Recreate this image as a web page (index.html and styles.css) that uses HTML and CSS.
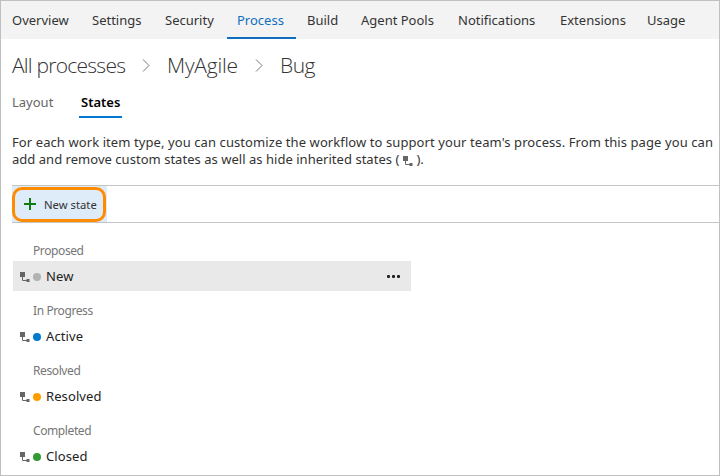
FILE: index.html
```
<!DOCTYPE html>
<html lang="en">
<head>
<meta charset="utf-8">
<title>Process - Bug states</title>
<link rel="stylesheet" href="styles.css">
</head>
<body>
<svg class="defs" width="0" height="0"><symbol id="inherit" viewBox="0 0 10 10"><path class="link" d="M2.500 4V8.500H7"/><path d="M0 0H5V5H0ZM6.500 7H9.500V10H6.500Z"/></symbol></svg>
<div class="page">
  <nav class="hubs">
    <a><span>Overview</span></a><a><span>Settings</span></a><a><span>Security</span></a><a class="selected"><span>Process</span></a><a><span>Build</span></a><a><span>Agent Pools</span></a><a><span>Notifications</span></a><a><span>Extensions</span></a><a><span>Usage</span></a>
  </nav>
  <header class="crumbs">
    <span class="all">All processes</span>
    <svg width="8" height="14" viewBox="0 0 8 14"><path d="M1 1.500L7 7.500L1 13.500"/></svg>
    <span class="process">MyAgile</span>
    <svg width="8" height="14" viewBox="0 0 8 14"><path d="M1 1.500L7 7.500L1 13.500"/></svg>
    <span class="type">Bug</span>
  </header>
  <div class="tabs"><a class="layout">Layout</a><a class="active">States</a></div>
  <div class="description">
    <p class="line-one">For each work item type, you can customize the workflow to support your team's process. From this page you can</p>
    <p class="line-two">add and remove custom states as well as hide inherited states (<svg class="inherit" width="10" height="10"><use href="#inherit"/></svg>).</p>
  </div>
  <div class="toolbar"><button class="new-state"><svg width="12" height="12" viewBox="0 0 12 12"><path d="M6 0V12M0 6H12"/></svg><span>New state</span></button></div>
  <main class="states">
    <section><h2>Proposed</h2><div class="row hovered"><svg class="inherit" width="10" height="10"><use href="#inherit"/></svg><i class="dot gray"></i><span>New</span><b class="more"><i></i><i></i><i></i></b></div></section>
    <section><h2>In Progress</h2><div class="row"><svg class="inherit" width="10" height="10"><use href="#inherit"/></svg><i class="dot blue"></i><span>Active</span></div></section>
    <section><h2>Resolved</h2><div class="row"><svg class="inherit" width="10" height="10"><use href="#inherit"/></svg><i class="dot orange"></i><span>Resolved</span></div></section>
    <section><h2>Completed</h2><div class="row"><svg class="inherit" width="10" height="10"><use href="#inherit"/></svg><i class="dot green"></i><span>Closed</span></div></section>
  </main>
</div>
</body>
</html>
```
FILE: styles.css
```
* { box-sizing: border-box; }
body { margin: 0; background: #fff; color: #333; font: 13px "Noto Sans", "Open Sans", sans-serif; }
.defs { position: absolute; }
.page { width: 720px; height: 476px; border: 1px solid #c0c0c0; overflow: hidden; }
.hubs { display: grid; grid-template-columns: 80px 73px 72px 70px 54px 97px 102px 87px 60px; height: 38px; padding-left: 1px; background: #f3f3f3; }
.hubs a { height: 38px; padding-left: 10px; line-height: 38px; white-space: nowrap; }
.hubs .selected { width: 69px; color: #106ebe; border-bottom: 2px solid #106ebe; }
.crumbs { display: flex; align-items: center; height: 52px; padding-left: 11px; font: 300 21px "Open Sans", sans-serif; white-space: nowrap; color: #333; }
.crumbs svg { flex: none; fill: none; stroke: #777; stroke-width: 1; }
.all { width: 130px; letter-spacing: -.75px; }
.process { width: 88px; margin-left: 17px; letter-spacing: -.2px; }
.type { margin-left: 17px; letter-spacing: -.5px; }
.tabs { display: flex; height: 27px; padding-left: 11px; line-height: 23px; }
.layout { width: 67px; color: #666; }
.tabs .active { width: 43px; padding-left: 2px; color: #000; font-weight: 600; border-bottom: 2px solid #0078d4; }
.description { height: 67px; padding: 16px 0 0 11px; line-height: 17px; letter-spacing: .087px; white-space: nowrap; }
.description p { margin: 0; height: 17px; }
.line-two { letter-spacing: .03px; }
.inherit { flex: none; fill: #666; }
.inherit .link, .link { fill: none; stroke: #666; }
.description .inherit { margin: 0 3px -2px 4px; }
.row .inherit { margin-top: 2px; }
.toolbar { display: flex; height: 38px; margin-left: 11px; border: solid #c4c4c4; border-width: 1px 0; }
.new-state { position: relative; display: flex; align-items: center; width: 95px; height: 36px; padding: 0 0 0 12px; border: 0; background: #deecf9; color: #333; font: 11.3px "Noto Sans", sans-serif; white-space: nowrap; }
.new-state::after { content: ""; position: absolute; inset: 1px 1px 0 0; border: 3px solid #ff8c00; border-radius: 10px; }
.new-state svg { margin-right: 8px; stroke: #107c10; stroke-width: 2; }
.states { padding: 18px 0 0 12px; }
section { height: 60px; }
h2 { height: 20px; margin: 0; padding-left: 20px; color: #767676; font-size: 12px; font-weight: 400; line-height: 20px; letter-spacing: -.4px; }
.row { display: flex; align-items: center; width: 398px; height: 30px; padding-left: 7px; color: #222; }
.row span { letter-spacing: .1px; }
.hovered { background: #e9e9e9; }
.dot { width: 8px; height: 8px; margin: 2px 5px 0 3px; border-radius: 50%; }
.gray { background: #b2b2b2; }
.blue { background: #007acc; }
.orange { background: #ff9d00; }
.green { background: #339933; }
.more { display: flex; gap: 2px; margin: 0 11px 0 auto; }
.more i { width: 3px; height: 3px; border-radius: 1px; background: #222; }
```
